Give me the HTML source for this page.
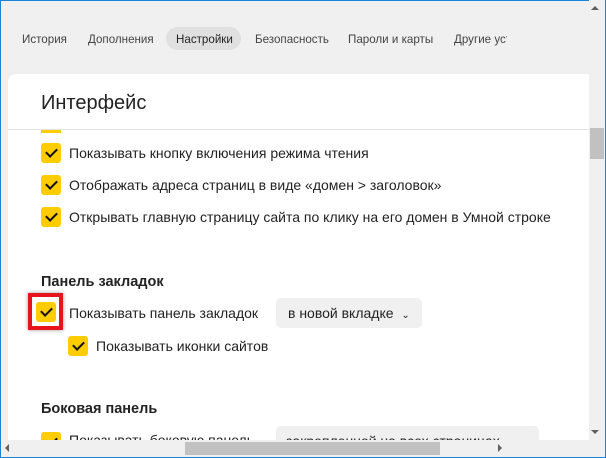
<!DOCTYPE html><html><head><meta charset="utf-8"><style>
*{margin:0;padding:0;box-sizing:border-box}
body{width:606px;height:458px;overflow:hidden;background:#f0f0f0;font-family:"Liberation Sans",sans-serif;position:relative;color:#222}
.frame{position:absolute;left:0;top:0;width:606px;height:458px;border:1px solid #1883d7;border-bottom:none}
.t{position:absolute;font-size:11.6px;color:#444;top:33px;white-space:nowrap}
.card{position:absolute;left:8px;top:74px;width:581px;height:366px;background:#fff;border-radius:8px 0 0 0;overflow:hidden}
.a{position:absolute;white-space:nowrap}
.cb{position:absolute;width:20px;height:20px;background:#ffcc00;border-radius:3px}
.cb:after{content:"";position:absolute;left:7px;top:3px;width:5px;height:9px;border:solid #111;border-width:0 2px 2px 0;transform:rotate(45deg)}
.tx{position:absolute;font-size:14px;white-space:nowrap;color:#222}
.h{position:absolute;font-size:14.5px;font-weight:bold;color:#222;white-space:nowrap}
.sel{position:absolute;background:#f0f0f0;border-radius:5px;height:30px;font-size:14px;padding:7px 10px;white-space:nowrap}
</style></head><body>
<div class="frame"></div>
<div class="t" style="left:22px">История</div>
<div class="t" style="left:88px">Дополнения</div>
<div style="position:absolute;left:166px;top:27px;width:75px;height:23px;background:#e0e0e0;border-radius:12px"></div>
<div class="t" style="left:176px;color:#222">Настройки</div>
<div class="t" style="left:255px">Безопасность</div>
<div class="t" style="left:348px">Пароли и карты</div>
<div class="t" style="left:454px;width:53px;overflow:hidden">Другие устройства</div>
<div class="card">
<div class="a" style="left:33px;top:18px;font-size:20px;color:#222">Интерфейс</div>
<div style="position:absolute;left:0;top:55px;width:581px;height:1px;background:#e4e4e4"></div>
<div style="position:absolute;left:33px;top:56px;width:20px;height:3px;background:#ffcc00"></div>
<div class="cb" style="left:33px;top:69px"></div><div class="tx" style="left:61px;top:71px">Показывать кнопку включения режима чтения</div>
<div class="cb" style="left:33px;top:101px"></div><div class="tx" style="left:61px;top:103px">Отображать адреса страниц в виде «домен &gt; заголовок»</div>
<div class="cb" style="left:33px;top:133px"></div><div class="tx" style="left:61px;top:135px">Открывать главную страницу сайта по клику на его домен в Умной строке</div>
<div class="h" style="left:33px;top:200px">Панель закладок</div>
<div style="position:absolute;left:20px;top:219px;width:35px;height:37px;border:4px solid #e8141b;box-shadow:0 0 4px rgba(0,0,0,.4)"></div>
<div class="cb" style="left:28px;top:228px"></div><div class="tx" style="left:61px;top:231px">Показывать панель закладок</div>
<div class="sel" style="left:268px;top:224px;padding:7px 12px">в новой вкладке &nbsp;<span style="font-size:10px">⌄</span></div>
<div class="cb" style="left:60px;top:262px"></div><div class="tx" style="left:88px;top:264px">Показывать иконки сайтов</div>
<div class="h" style="left:33px;top:327px">Боковая панель</div>
<div class="cb" style="left:33px;top:358px"></div><div class="tx" style="left:61px;top:358px">Показывать боковую панель</div>
<div class="sel" style="left:268px;top:352px;width:263px">закрепленной на всех страницах</div>
</div>
<div style="position:absolute;left:589px;top:0;width:16px;height:440px;background:#f0f0f0"></div>
<div style="position:absolute;left:590px;top:128px;width:14px;height:31px;background:#c1c1c1"></div>
<div style="position:absolute;left:591px;top:6px;width:0;height:0;border:4px solid transparent;border-bottom:4px solid #606060;border-top:none"></div>
<div style="position:absolute;left:591px;top:430px;border:4px solid transparent;border-top:4px solid #606060;border-bottom:none"></div>
<div style="position:absolute;left:1px;top:440px;width:588px;height:17px;background:#f0f0f0"></div>
<div style="position:absolute;left:185px;top:442px;width:255px;height:13px;background:#c1c1c1"></div>
<div style="position:absolute;left:5px;top:444px;border:4px solid transparent;border-right:4px solid #606060;border-left:none"></div>
<div style="position:absolute;left:498px;top:444px;border:4px solid transparent;border-left:4px solid #606060;border-right:none"></div>
<div style="position:absolute;left:0;top:457px;width:606px;height:1px;background:#1883d7"></div>
</body></html>
